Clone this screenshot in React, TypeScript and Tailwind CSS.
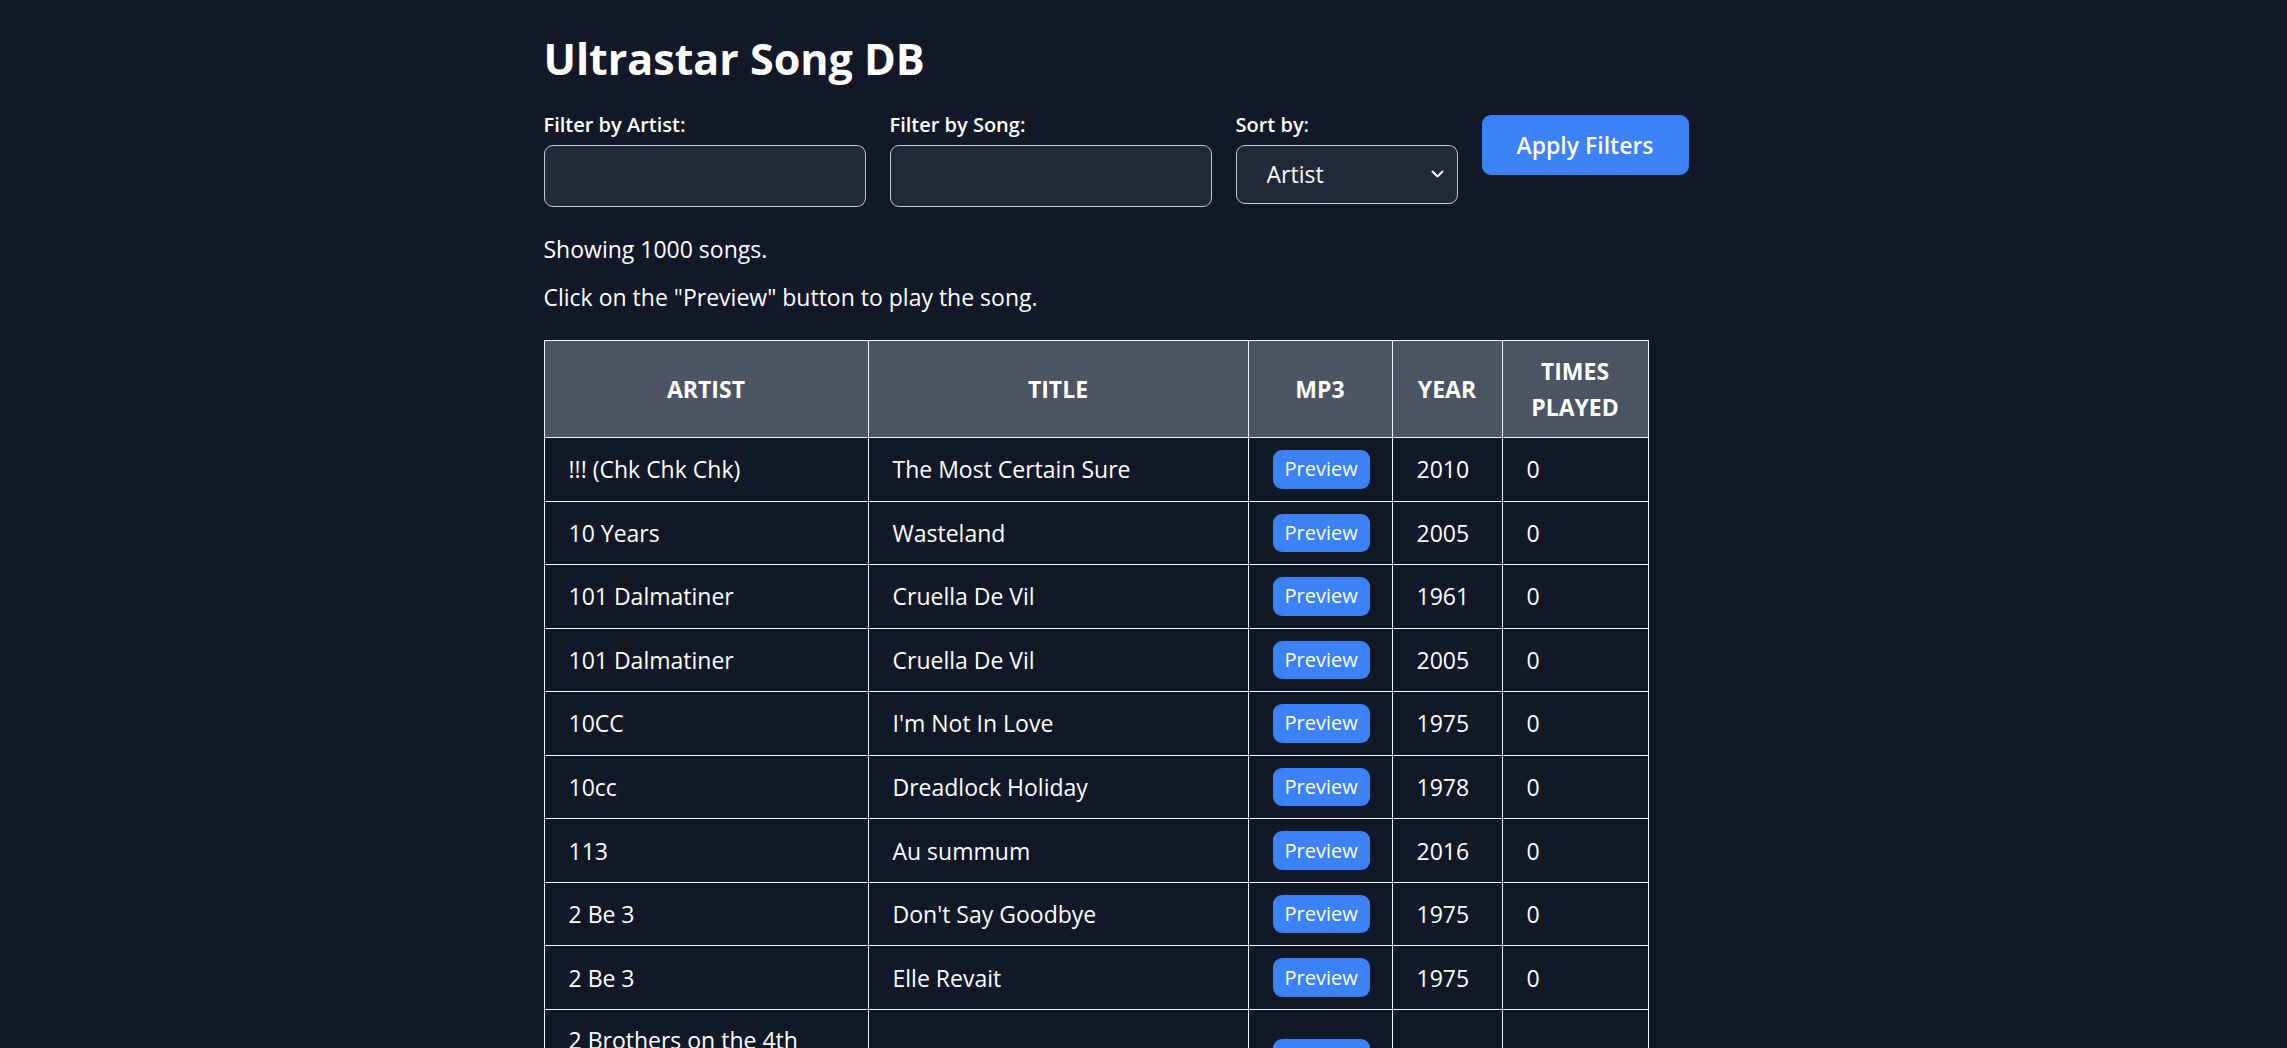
import { useState } from 'react';

const songs: [string, string, string, number][] = [
  ['!!! (Chk Chk Chk)', 'The Most Certain Sure', '2010', 0],
  ['10 Years', 'Wasteland', '2005', 0],
  ['101 Dalmatiner', 'Cruella De Vil', '1961', 0],
  ['101 Dalmatiner', 'Cruella De Vil', '2005', 0],
  ['10CC', "I'm Not In Love", '1975', 0],
  ['10cc', 'Dreadlock Holiday', '1978', 0],
  ['113', 'Au summum', '2016', 0],
  ['2 Be 3', "Don't Say Goodbye", '1975', 0],
  ['2 Be 3', 'Elle Revait', '1975', 0],
  ['2 Brothers on the 4th Floor', 'Dreams', '1994', 0],
  ['2 Unlimited', 'No Limit', '1993', 0],
  ['3 Doors Down', 'Kryptonite', '2000', 0],
];

function Chevron() {
  return (
    <svg width="13" height="9" viewBox="0 0 13 9" fill="none">
      <path d="M1.5 1.5 L6.5 6.5 L11.5 1.5" stroke="white" strokeWidth="2" strokeLinecap="round" strokeLinejoin="round" />
    </svg>
  );
}

export default function App() {
  let [artist, setArtist] = useState('');
  let [song, setSong] = useState('');
  let [sort, setSort] = useState('artist');

  return (
    <div className="min-h-screen bg-[#111827] text-white font-['Open_Sans','Noto_Sans',sans-serif]">
      <div className="mx-auto max-w-[1200px] pt-[32px]">
        <h1 className="mb-[29px] text-[43px] font-bold leading-[54px]">Ultrastar Song DB</h1>

        <div className="mb-[24px] flex items-start gap-[24px]">
          <div>
            <label className="mb-[10px] block text-[20px] font-semibold leading-[20px]">Filter by Artist:</label>
            <input
              value={artist}
              onChange={(e) => setArtist(e.target.value)}
              className="h-[62px] w-[322px] rounded-[9px] border border-[#c4c8cf] bg-[#1f2937] px-[12px] text-[23px] text-white outline-none"
            />
          </div>
          <div>
            <label className="mb-[10px] block text-[20px] font-semibold leading-[20px]">Filter by Song:</label>
            <input
              value={song}
              onChange={(e) => setSong(e.target.value)}
              className="h-[62px] w-[322px] rounded-[9px] border border-[#c4c8cf] bg-[#1f2937] px-[12px] text-[23px] text-white outline-none"
            />
          </div>
          <div>
            <label className="mb-[10px] block text-[20px] font-semibold leading-[20px]">Sort by:</label>
            <div className="relative">
              <select
                value={sort}
                onChange={(e) => setSort(e.target.value)}
                className="h-[59px] w-[222px] appearance-none rounded-[9px] border border-[#c4c8cf] bg-[#1f2937] pl-[30px] text-[23px] text-white outline-none"
              >
                <option value="artist">Artist</option>
                <option value="title">Title</option>
                <option value="year">Year</option>
                <option value="played">Times Played</option>
              </select>
              <span className="pointer-events-none absolute right-[14px] top-[25px]">
                <Chevron />
              </span>
            </div>
          </div>
          <button className="h-[60px] w-[207px] rounded-[9px] bg-[#3b82f6] text-[23px] font-semibold leading-[36px]">
            Apply Filters
          </button>
        </div>

        <p className="mb-[12px] text-[23px] leading-[36px]">Showing 1000 songs.</p>
        <p className="mb-[25px] text-[23px] leading-[36px]">Click on the "Preview" button to play the song.</p>

        <table className="w-[1104px] table-fixed border-collapse text-[23px] leading-[36px]">
          <colgroup>
            <col className="w-[324px]" />
            <col className="w-[380px]" />
            <col className="w-[144px]" />
            <col className="w-[110px]" />
            <col className="w-[146px]" />
          </colgroup>
          <thead>
            <tr className="bg-[#4b5563]">
              <th className="border border-gray-100 px-[24px] py-[12px] text-center font-bold uppercase">Artist</th>
              <th className="border border-gray-100 px-[24px] py-[12px] text-center font-bold uppercase">Title</th>
              <th className="border border-gray-100 px-[24px] py-[12px] text-center font-bold uppercase">MP3</th>
              <th className="border border-gray-100 px-[24px] py-[12px] text-center font-bold uppercase">Year</th>
              <th className="border border-gray-100 px-[24px] py-[12px] text-center font-bold uppercase">Times Played</th>
            </tr>
          </thead>
          <tbody>
            {songs.map(([a, t, y, n], i) => (
              <tr key={i}>
                <td className="border border-gray-100 px-[24px] py-[12px]">{a}</td>
                <td className="border border-gray-100 px-[24px] py-[12px]">{t}</td>
                <td className="border border-gray-100 px-[24px] py-[12px]">
                  <button className="block h-[38.55px] rounded-[9px] bg-[#3b82f6] px-[12px] text-[20px] leading-[30px]">
                    Preview
                  </button>
                </td>
                <td className="border border-gray-100 px-[24px] py-[12px]">{y}</td>
                <td className="border border-gray-100 px-[24px] py-[12px]">{n}</td>
              </tr>
            ))}
          </tbody>
        </table>
      </div>
    </div>
  );
}
